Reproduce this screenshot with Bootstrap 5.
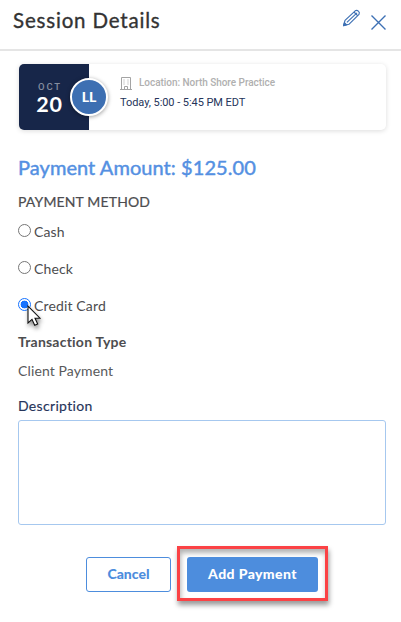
<!DOCTYPE html>
<html lang="en">
<head>
<meta charset="utf-8">
<meta name="viewport" content="width=device-width, initial-scale=1">
<title>Session Details</title>
<link href="https://cdn.jsdelivr.net/npm/bootstrap@5.3.0/dist/css/bootstrap.min.css" rel="stylesheet">
<style>
body{font-family:Lato,"Liberation Sans",sans-serif;color:#4d4d4f;background:#fff;min-height:100vh;font-size:14px;line-height:20px}
.panel-head{height:51px;border-bottom:2px solid #e5e5e5;padding:0 14px 9px 13px}
.panel-head h1{font-size:20.5px;line-height:24px;font-weight:400;color:#333;letter-spacing:.82px;-webkit-text-stroke:.35px #333}
.head-icons{gap:8px;height:42px}
.head-icons svg:first-child{margin-top:-4px}
.panel-main{padding:13px 15px 0 18px}
.session{height:66px;margin-left:1px;border-radius:5px;background:#fff;box-shadow:0 1px 5px rgba(0,0,0,.14)}
.date-box{width:70px;background:#172649;border-radius:5px 0 0 5px;padding:17px 9px 0 0}
.month{font:500 9.5px/12px Roboto,sans-serif;letter-spacing:1.8px;color:#858d9f;padding-left:1px}
.day{font:700 21.5px/20px Lato,sans-serif;letter-spacing:.8px;color:#fff;margin-top:1px}
.initials{width:38px;height:38px;left:51px;top:14px;border:2px solid #fff;background:#3d6fb2;color:#fff;font-size:14px;font-weight:900;padding-bottom:1px;box-shadow:0 1px 4px rgba(0,0,0,.4)}
.session-info{padding:13px 0 0 31px;font-family:Roboto,sans-serif}
.place{font-size:10px;line-height:12px;font-weight:500;color:#b0b0b0;gap:7px;height:13px;letter-spacing:-.04px}
.when{font-size:11px;line-height:14px;color:#25345a;margin-top:6px;letter-spacing:-.06px}
.amount{font-size:20px;line-height:24px;font-weight:400;color:#5490e2;margin:25px 0 0;letter-spacing:.06px;-webkit-text-stroke:.45px #5490e2}
.method{margin-top:13px;letter-spacing:.15px;font-weight:400;-webkit-text-stroke:.2px #4d4d4f}
.choices{padding-top:1px}
.choice{height:37px;gap:3px}
.choice .form-check-input{width:13px;height:13px;margin:-3px 0 0;border:1px solid #767676;box-shadow:none}
.choice .form-check-input:checked{background:radial-gradient(circle,#1673ff 0 3.6px,#fff 4.2px);border-color:#1673ff}
.choice span{letter-spacing:.15px}
.type-title{font-weight:700;letter-spacing:.22px;margin-top:8px}
.type-value{margin-top:9px;letter-spacing:.12px;color:#58595b}
.desc-label{margin:15px 0 4px;color:#26345a;letter-spacing:.32px;-webkit-text-stroke:.15px #26345a}
.desc-box{height:105px;border:1px solid #a6c8ef;border-radius:3px;resize:none}
.actions{padding:21px 0 0 68px;gap:6px}
.actions .btn{height:35px;border-radius:3px;font-size:14px;font-weight:900;padding:0 0 2px;line-height:20px}
.btn-cancel{width:85px;margin-top:11px;border:1px solid #4d8ddd;color:#4d8ddd;background:#fff}
.spotlight{width:151px;height:55px;border:3px solid #fb4245;padding:8px 7px;box-shadow:1px 4px 5px rgba(0,0,0,.4),inset 1px 4px 5px rgba(0,0,0,.3)}
.btn-add{width:131px;background:#4d8ddd;color:#fff;letter-spacing:.4px}
.pointer{left:7px;top:17px;filter:drop-shadow(1px 3px 2px rgba(0,0,0,.45));z-index:2}
</style>
</head>
<body>
<header class="panel-head d-flex justify-content-between align-items-center">
<h1 class="m-0">Session Details</h1>
<div class="head-icons d-flex align-items-center">
<svg width="20" height="20" viewBox="0 0 20 20" fill="none" stroke="#3d70b4" stroke-width="1.15" stroke-linejoin="round"><path d="M3 12.4 13.2 2.8q1.6-1.1 3.2.3t.6 3.3L6.9 16.3 1.6 17.6ZM4.9 14.3 15 4.9M12 4l3.8 3.9"/><path d="m1.6 17.6.8-3 2.2 2.2Z" fill="#3d70b4"/></svg>
<svg width="17" height="17" viewBox="0 0 17 17" stroke="#3d70b4" stroke-width="1.4" class="mt-1"><path d="m1.5 1.5 14 14m0-14-14 14"/></svg>
</div>
</header>
<main class="panel-main">
<section class="session d-flex position-relative">
<div class="date-box text-center"><div class="month">OCT</div><div class="day">20</div></div>
<div class="initials rounded-circle position-absolute d-flex align-items-center justify-content-center">LL</div>
<div class="session-info">
<div class="place d-flex"><svg width="12" height="13" viewBox="0 0 12 13" fill="none" stroke="#a4a4a4"><path d="M0 12.5h12M1.5 12V.5h9V12M4.5 12V9.5h3V12M3.5 3h1m3 0h1m-5 2h1m3 0h1m-5 2h1m3 0h1"/></svg><span>Location: North Shore Practice</span></div>
<div class="when">Today, 5:00 - 5:45 PM EDT</div>
</div>
</section>
<h2 class="amount">Payment Amount: $125.00</h2>
<div class="method">PAYMENT METHOD</div>
<div class="choices">
<label class="choice d-flex align-items-center"><input class="form-check-input" type="radio" name="method"><span>Cash</span></label>
<label class="choice d-flex align-items-center"><input class="form-check-input" type="radio" name="method"><span>Check</span></label>
<label class="choice d-flex align-items-center position-relative"><input class="form-check-input" type="radio" name="method" checked><span>Credit Card</span>
<svg class="pointer position-absolute" width="16" height="24" viewBox="0 0 16 24"><path d="M3 2v17l4-3.7 2.7 6 3-1.3-2.7-5.8h5Z" fill="#fff" stroke="#111" stroke-width="1.1"/></svg></label>
</div>
<div class="type-title">Transaction Type</div>
<div class="type-value">Client Payment</div>
<label class="desc-label d-block" for="description">Description</label>
<textarea class="desc-box form-control" id="description"></textarea>
<div class="actions d-flex">
<button class="btn btn-cancel" type="button">Cancel</button>
<div class="spotlight"><button class="btn btn-add" type="button">Add Payment</button></div>
</div>
</main>
<script src="https://cdn.jsdelivr.net/npm/bootstrap@5.3.0/dist/js/bootstrap.bundle.min.js"></script>
</body>
</html>
